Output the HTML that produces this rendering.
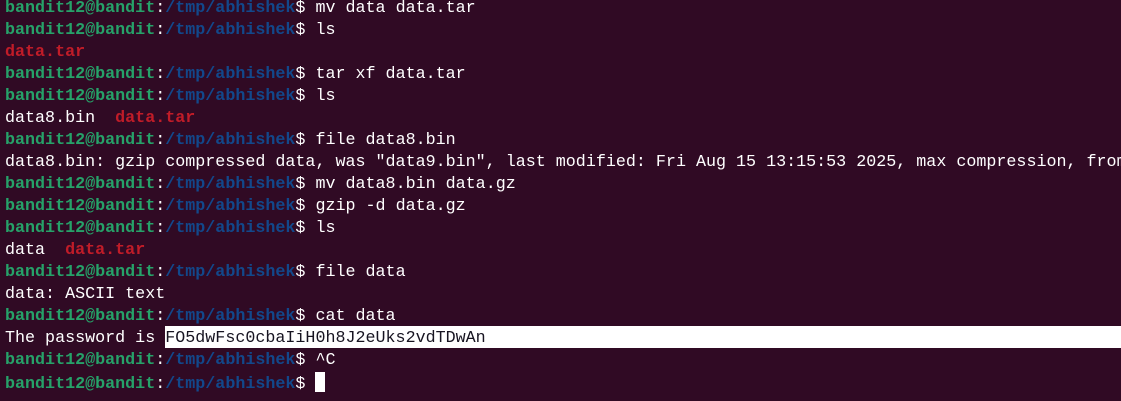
<!DOCTYPE html>
<html><head><style>
html,body{margin:0;padding:0;background:#300a24;width:1121px;height:401px;overflow:hidden}
pre{margin:0;position:absolute;left:5px;top:-2px;font-family:"Liberation Mono",monospace;font-size:16.7px;line-height:22px;color:#ffffff;white-space:pre}
.g{color:#26a269;font-weight:bold}.b{color:#12488b;font-weight:bold}.r{color:#c01c28;font-weight:bold}
.sel{background:#fff;color:#171421}
.cur{display:inline-block;width:10px;height:20px;background:#fff;vertical-align:-4px}
</style></head><body>
<div style="position:absolute;left:165px;top:326px;width:956px;height:22px;background:#fff"></div>
<pre><span class="g">bandit12@bandit</span>:<span class="b">/tmp/abhishek</span>$ mv data data.tar
<span class="g">bandit12@bandit</span>:<span class="b">/tmp/abhishek</span>$ ls
<span class="r">data.tar</span>
<span class="g">bandit12@bandit</span>:<span class="b">/tmp/abhishek</span>$ tar xf data.tar
<span class="g">bandit12@bandit</span>:<span class="b">/tmp/abhishek</span>$ ls
data8.bin  <span class="r">data.tar</span>
<span class="g">bandit12@bandit</span>:<span class="b">/tmp/abhishek</span>$ file data8.bin
data8.bin: gzip compressed data, was "data9.bin", last modified: Fri Aug 15 13:15:53 2025, max compression, from
<span class="g">bandit12@bandit</span>:<span class="b">/tmp/abhishek</span>$ mv data8.bin data.gz
<span class="g">bandit12@bandit</span>:<span class="b">/tmp/abhishek</span>$ gzip -d data.gz
<span class="g">bandit12@bandit</span>:<span class="b">/tmp/abhishek</span>$ ls
data  <span class="r">data.tar</span>
<span class="g">bandit12@bandit</span>:<span class="b">/tmp/abhishek</span>$ file data
data: ASCII text
<span class="g">bandit12@bandit</span>:<span class="b">/tmp/abhishek</span>$ cat data
The password is <span class="sel">FO5dwFsc0cbaIiH0h8J2eUks2vdTDwAn</span>
<span class="g">bandit12@bandit</span>:<span class="b">/tmp/abhishek</span>$ ^C
<span class="g">bandit12@bandit</span>:<span class="b">/tmp/abhishek</span>$ <span class="cur"></span></pre>
</body></html>
